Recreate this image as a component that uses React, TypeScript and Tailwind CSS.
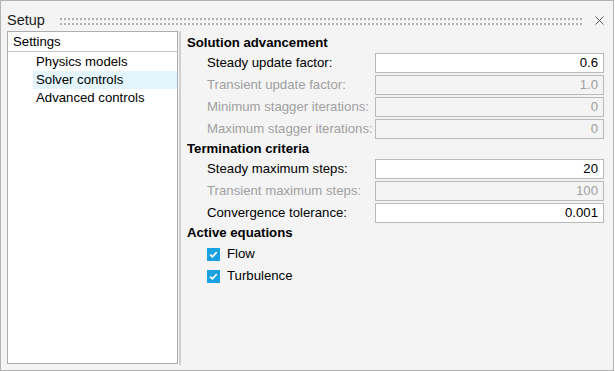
import React from "react";

const Check = () => (
  <div className="w-[13px] h-[13px] bg-[#1ba1e2] flex items-center justify-center">
    <svg width="13" height="13" viewBox="0 0 13 13">
      <path d="M3.2 6.6 L5.4 8.8 L9.8 4.2" fill="none" stroke="white" strokeWidth="1.7" />
    </svg>
  </div>
);

type Row = { label: string; value: string; disabled?: boolean };

const Field = ({ label, value, disabled }: Row) => (
  <div className="flex items-center pl-[20px] h-[20px]">
    <div className={`w-[168px] whitespace-nowrap ${disabled ? "text-[#a0a0a0]" : "text-black"}`}>{label}</div>
    <div
      className={`flex-1 h-[20px] border border-[#b9b9b9] flex items-center justify-end pr-[5px] ${
        disabled ? "bg-[#f4f4f4] text-[#a0a0a0]" : "bg-white text-black"
      }`}
    >
      {value}
    </div>
  </div>
);

const Header = ({ children }: { children: React.ReactNode }) => (
  <div className="h-[20px] flex items-center font-bold text-black">{children}</div>
);

export default function App() {
  return (
    <div className="w-[614px] h-[371px] bg-[#f4f4f4] border border-[#b4b4b4] flex flex-col font-['Liberation_Sans',Arial,sans-serif] text-[13.2px] text-black">
      {/* title bar */}
      <div className="h-[30px] pt-[9px] flex items-center pl-[6px]">
        <div className="w-[53px] text-[14.5px] leading-[21px] text-[#1a1a1a]">Setup</div>
        <div className="flex-1 h-[8px]">
          <svg width="100%" height="8">
            <defs>
              <pattern id="dots" width="4" height="5" patternUnits="userSpaceOnUse">
                <rect x="0" y="1" width="2" height="2" fill="#b0b0b0" />
              </pattern>
            </defs>
            <rect x="0" y="0" width="100%" height="8" fill="url(#dots)" />
          </svg>
        </div>
        <div className="ml-[11px] mr-[9px] w-[9px] h-[9px]">
          <svg width="9" height="9" viewBox="0 0 9 9">
            <path d="M0.5 0.5 L8.5 8.5 M8.5 0.5 L0.5 8.5" stroke="#555" strokeWidth="1" />
          </svg>
        </div>
      </div>

      {/* main */}
      <div className="flex flex-1 pl-[6px] pb-[6px]">
        <div className="w-[171px] h-[333px] border border-[#adadad] bg-white flex flex-col">
          <div className="h-[20px] border-b border-[#c8c8c8] pl-[5px] flex items-center">Settings</div>
          <div className="flex flex-col pt-[1px]">
            <div className="ml-[25px] pl-[3px] h-[18px] flex items-center">Physics models</div>
            <div className="ml-[25px] pl-[3px] h-[18px] flex items-center bg-[#e3f4fc]">Solver controls</div>
            <div className="ml-[25px] pl-[3px] h-[18px] flex items-center">Advanced controls</div>
          </div>
        </div>
        <div className="ml-[1px] w-[2px] h-[334px] bg-[#d0d0d0]" />

        <div className="ml-[6px] flex-1 pr-[9px] pt-[2px] flex flex-col">
          <Header>Solution advancement</Header>
          <div className="flex flex-col gap-[2px]">
            <Field label="Steady update factor:" value="0.6" />
            <Field label="Transient update factor:" value="1.0" disabled />
            <Field label="Minimum stagger iterations:" value="0" disabled />
            <Field label="Maximum stagger iterations:" value="0" disabled />
          </div>
          <Header>Termination criteria</Header>
          <div className="flex flex-col gap-[2px]">
            <Field label="Steady maximum steps:" value="20" />
            <Field label="Transient maximum steps:" value="100" disabled />
            <Field label="Convergence tolerance:" value="0.001" />
          </div>
          <Header>Active equations</Header>
          <div className="flex flex-col">
            <div className="h-[22px] pl-[20px] flex items-center gap-[7px]">
              <Check />
              <span>Flow</span>
            </div>
            <div className="h-[22px] pl-[20px] flex items-center gap-[7px]">
              <Check />
              <span>Turbulence</span>
            </div>
          </div>
        </div>
      </div>
    </div>
  );
}
